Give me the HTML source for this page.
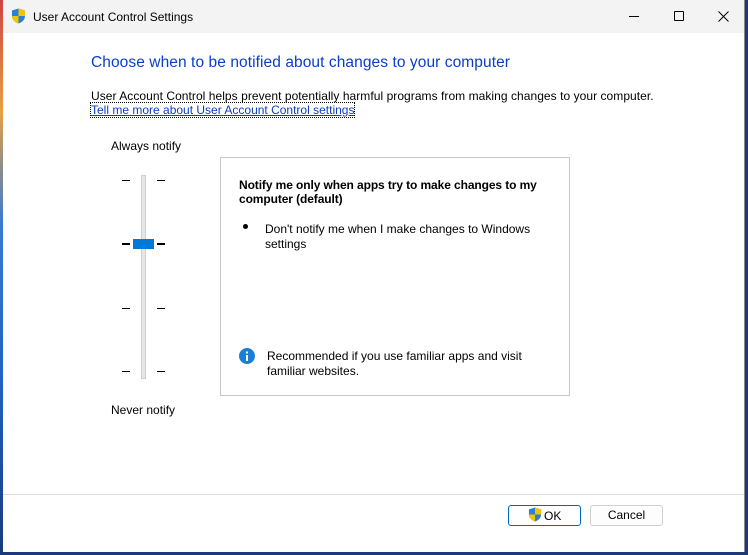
<!DOCTYPE html>
<html><head><style>
*{margin:0;padding:0;box-sizing:border-box}
body{width:748px;height:555px;overflow:hidden;background:#1a3a7a;font-family:"Liberation Sans",sans-serif;font-size:12px;color:#000;position:relative}
.win{position:absolute;left:3px;top:0;width:742px;height:552px;background:#fff;border-right:1px solid #8a8a8a}
.tb{position:absolute;left:0;top:0;width:100%;height:33px;background:#f3f3f3}
.a{position:absolute;white-space:nowrap}
.tick{position:absolute;width:8px;height:1px;background:#000}
</style></head><body>
<div style="position:absolute;left:0;top:0;width:3px;height:555px;background:linear-gradient(#c44 0,#e8a040 20%,#3a7ad0 40%,#2060c0 70%,#1a3a7a 100%)"></div>
<div class="win">
<div class="tb">
<svg class="a" style="left:8px;top:8px" width="15" height="16" viewBox="0 0 15 16"><path d="M7.5 0.5 L14 2.5 V8 C14 12 10.5 14.5 7.5 15.5 C4.5 14.5 1 12 1 8 V2.5 Z" fill="#2a7fd6"/><path d="M7.5 0.5 L14 2.5 V8 H7.5Z" fill="#f5c400"/><path d="M1 8 H7.5 V15.5 C4.5 14.5 1 12 1 8Z" fill="#f5c400"/></svg>
<div class="a" style="left:30px;top:10px;font-size:12px">User Account Control Settings</div>
<div class="a" style="left:626px;top:16px;width:10px;height:1px;background:#000"></div>
<div class="a" style="left:671px;top:11px;width:10px;height:10px;border:1px solid #000;border-radius:1px"></div>
<svg class="a" style="left:715px;top:11px" width="11" height="11"><path d="M0.5 0.5L10.5 10.5M10.5 0.5L0.5 10.5" stroke="#000" stroke-width="1"/></svg>
</div>
<div class="a" style="left:88px;top:54px;font-size:15.5px;letter-spacing:0.08px;color:#0a3ec8">Choose when to be notified about changes to your computer</div>
<div class="a" style="left:88px;top:89px;letter-spacing:0.05px">User Account Control helps prevent potentially harmful programs from making changes to your computer.</div>
<div class="a" style="left:88px;top:103px;color:#0a3ec8;text-decoration:underline;outline:1px dotted #000">Tell me more about User Account Control settings</div>
<div class="a" style="left:108px;top:139px">Always notify</div>
<div class="a" style="left:108px;top:403px">Never notify</div>
<div class="a" style="left:138px;top:175px;width:5px;height:204px;background:#e6e6e6;border:1px solid #cfcfcf"></div>
<div class="tick" style="left:119px;top:180px"></div><div class="tick" style="left:154px;top:180px"></div>
<div class="tick" style="left:119px;top:243px;height:2px"></div><div class="tick" style="left:154px;top:243px;height:2px"></div>
<div class="tick" style="left:119px;top:308px"></div><div class="tick" style="left:154px;top:308px"></div>
<div class="tick" style="left:119px;top:371px"></div><div class="tick" style="left:154px;top:371px"></div>
<div class="a" style="left:130px;top:239px;width:21px;height:10px;background:#0078d7"></div>
<div class="a" style="left:217px;top:157px;width:350px;height:239px;border:1px solid #c8c8c8"></div>
<div class="a" style="left:236px;top:178px;font-weight:bold;white-space:normal;width:320px;line-height:14px;letter-spacing:-0.1px">Notify me only when apps try to make changes to my computer (default)</div>
<div class="a" style="left:240px;top:224px;width:5px;height:5px;border-radius:50%;background:#000"></div>
<div class="a" style="left:262px;top:222px;white-space:normal;width:290px;line-height:15px">Don't notify me when I make changes to Windows settings</div>
<svg class="a" style="left:236px;top:348px" width="16" height="16"><circle cx="8" cy="8" r="8" fill="#1a7fd4"/><rect x="7" y="7" width="2" height="6" fill="#fff"/><rect x="7" y="3.5" width="2" height="2" fill="#fff"/></svg>
<div class="a" style="left:264px;top:349px;white-space:normal;width:290px;line-height:15px">Recommended if you use familiar apps and visit familiar websites.</div>
<div class="a" style="left:0;top:494px;width:100%;height:1px;background:#dcdcdc"></div>
<div class="a" style="left:505px;top:505px;width:73px;height:21px;border:1px solid #0067c0;border-radius:3px"></div>
<svg class="a" style="left:525px;top:507px" width="14" height="15" viewBox="0 0 15 16"><path d="M7.5 0.5 L14 2.5 V8 C14 12 10.5 14.5 7.5 15.5 C4.5 14.5 1 12 1 8 V2.5 Z" fill="#2a7fd6"/><path d="M7.5 0.5 L14 2.5 V8 H7.5Z" fill="#f5c400"/><path d="M1 8 H7.5 V15.5 C4.5 14.5 1 12 1 8Z" fill="#f5c400"/></svg>
<div class="a" style="left:541px;top:509px">OK</div>
<div class="a" style="left:587px;top:505px;width:73px;height:21px;border:1px solid #d0d0d0;border-radius:3px;background:#fdfdfd;text-align:center;line-height:19px">Cancel</div>
</div>
</body></html>
